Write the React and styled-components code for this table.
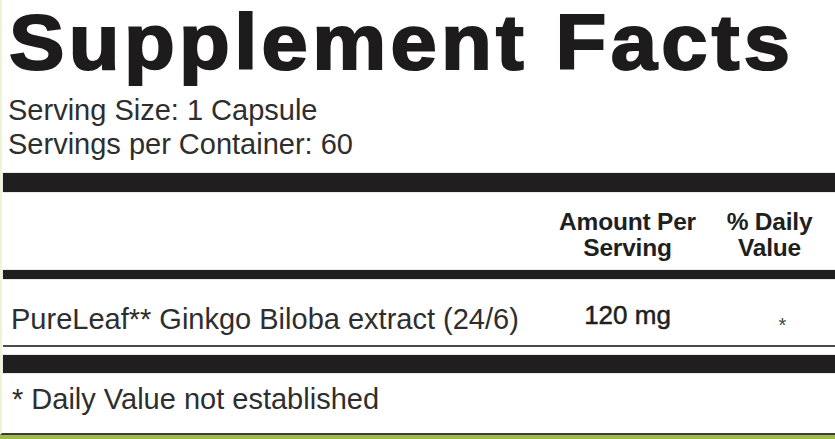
import React from "react";
import styled, { createGlobalStyle } from "styled-components";

const GlobalStyle = createGlobalStyle`
  html, body { margin: 0; padding: 0; }
  body {
    background: #9fbb45;
    font-family: "Liberation Sans", Arial, Helvetica, sans-serif;
    color: #2a2a2a;
  }
`;

const Page = styled.div`
  width: 835px;
  height: 439px;
  overflow: hidden;
  background: #9fbb45;
`;

const Label = styled.div`
  height: 433px;
  background: #ffffff;
  border-left: 2px solid #eef5d4;
  border-bottom: 2px solid #3b3b38;
  padding-left: 1px;
  box-sizing: content-box;
  display: flex;
  flex-direction: column;
`;

const TitleWrap = styled.div`
  margin-top: 2px;
  padding-left: 6px;
  height: 80px;
`;

const Title = styled.h1`
  display: inline-block;
  margin: 0;
  font-family: "Liberation Sans", Arial, sans-serif;
  font-weight: 700;
  font-size: 77px;
  line-height: 80px;
  letter-spacing: 4px;
  color: #1d1b1c;
  -webkit-text-stroke: 2px #1d1b1c;
  white-space: nowrap;
  transform: scaleX(1.08);
  transform-origin: left center;
`;

const ServingInfo = styled.div`
  margin-top: 11px;
  padding-left: 5px;
  font-size: 29px;
  line-height: 34px;
  color: #2e2e2e;
`;

const Bar = styled.div`
  height: ${(p) => p.$h}px;
  margin-top: ${(p) => p.$mt || 0}px;
  background: #211e1f;
  box-shadow: 0 0 1px rgba(0, 0, 0, 0.5);
`;

const Rule = styled.div`
  height: 2px;
  background: #4a4a48;
`;

const Row = styled.div`
  display: grid;
  grid-template-columns: 1fr 145px 135px;
  height: ${(p) => p.$h}px;
  box-sizing: border-box;
`;

const HeadCell = styled.div`
  padding-top: 17px;
  padding-left: ${(p) => p.$shift || 0}px;
  text-align: center;
  font-weight: 700;
  font-size: 24.5px;
  line-height: 26px;
  letter-spacing: -0.2px;
  color: #1f1f1f;
`;

const NameCell = styled.div`
  padding-top: 23px;
  padding-left: 8px;
  font-size: 29px;
  line-height: 34px;
  color: #2e2e2e;
  white-space: nowrap;
`;

const AmountCell = styled.div`
  padding-top: 21px;
  text-align: center;
  font-size: 26px;
  line-height: 30px;
  color: #1f1f1f;
  -webkit-text-stroke: 0.5px #1f1f1f;
`;

const StarCell = styled.div`
  padding-top: 34px;
  padding-left: 30px;
  text-align: center;
  font-size: 20px;
  line-height: 24px;
  color: #444;
`;

const Footnote = styled.div`
  padding-top: 9px;
  padding-left: 9px;
  font-size: 29px;
  line-height: 34px;
  color: #2e2e2e;
`;

export default function App() {
  return (
    <>
      <GlobalStyle />
      <Page>
        <Label>
          <TitleWrap>
            <Title>Supplement Facts</Title>
          </TitleWrap>
          <ServingInfo>
            <div>Serving Size: 1 Capsule</div>
            <div>Servings per Container: 60</div>
          </ServingInfo>
          <Bar $h={19} $mt={12} />
          <Row $h={78}>
            <div />
            <HeadCell>
              Amount Per
              <br />
              Serving
            </HeadCell>
            <HeadCell $shift={4}>
              % Daily
              <br />
              Value
            </HeadCell>
          </Row>
          <Bar $h={9} />
          <Row $h={66}>
            <NameCell>PureLeaf** Ginkgo Biloba extract (24/6)</NameCell>
            <AmountCell>120 mg</AmountCell>
            <StarCell>*</StarCell>
          </Row>
          <Rule />
          <Bar $h={18} $mt={8} />
          <Footnote>* Daily Value not established</Footnote>
        </Label>
      </Page>
    </>
  );
}
